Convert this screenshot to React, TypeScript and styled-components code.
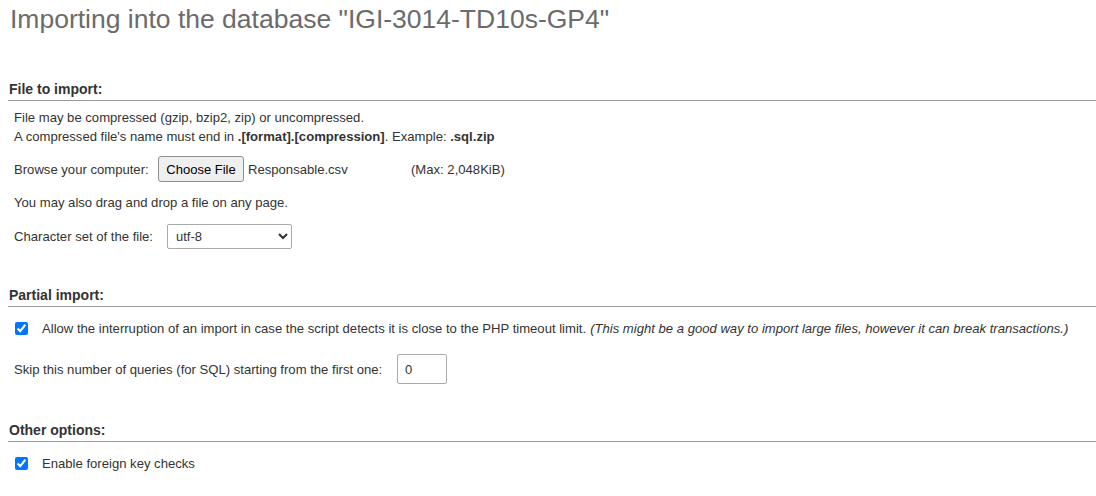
import * as React from 'react';
import styled, { createGlobalStyle } from 'styled-components';

const GlobalStyle = createGlobalStyle`
  html, body {
    margin: 0;
    padding: 0;
    background: #fff;
  }
  body {
    font-family: "Liberation Sans", Arial, sans-serif;
    font-size: 13px;
    color: #333;
  }
`;

const Page = styled.div`
  padding: 3px 0 0 8px;
`;

const Title = styled.h2`
  margin: 0 0 45px 2px;
  font-size: 26.5px;
  line-height: 32px;
  font-weight: normal;
  color: #6b6b6b;
`;

const Section = styled.section<{ gap?: number }>`
  margin-bottom: ${(p) => p.gap ?? 0}px;
`;

const SectionHeader = styled.h3`
  margin: 0;
  padding-left: 1px;
  height: 20px;
  line-height: 18px;
  font-size: 14px;
  font-weight: bold;
  color: #333;
  border-bottom: 1px solid #999;
`;

const Body = styled.div`
  padding-left: 6px;
  font-size: 13.1px;
`;

const Row = styled.div<{ top: number }>`
  display: flex;
  align-items: center;
  margin-top: ${(p) => p.top}px;
  min-height: 19px;
  line-height: 19px;
`;

const Note = styled.div<{ top?: number }>`
  margin-top: ${(p) => p.top ?? 0}px;
  line-height: 19px;
`;

const Label = styled.label<{ width: number }>`
  width: ${(p) => p.width}px;
  flex-shrink: 0;
`;

const FileButton = styled.button`
  width: 86px;
  height: 26px;
  padding: 0;
  font-family: inherit;
  font-size: 13px;
  color: #000;
  background: #efefef;
  border: 1px solid #8f8f8f;
  border-radius: 3px;
`;

const FileName = styled.span`
  margin-left: 4px;
  width: 163px;
`;

const Charset = styled.select`
  width: 125px;
  height: 25px;
  padding: 0 4px;
  font-family: inherit;
  font-size: 13px;
  color: #333;
  background: #fff;
  border: 1px solid #aaa;
  border-radius: 2px;
`;

const Check = styled.input`
  width: 13px;
  height: 13px;
  margin: 0 14px 0 1px;
  accent-color: #0075ff;
`;

const Hint = styled.em`
  margin-left: 4px;
`;

const NumberInput = styled.input`
  width: 50px;
  height: 30px;
  box-sizing: border-box;
  padding: 0 7px;
  font-family: inherit;
  font-size: 13px;
  color: #333;
  border: 1px solid #aaa;
  border-radius: 2px;
`;

export default function App() {
  return (
    <Page>
      <GlobalStyle />
      <Title>Importing into the database "IGI-3014-TD10s-GP4"</Title>

      <Section gap={37}>
        <SectionHeader>File to import:</SectionHeader>
        <Body>
          <Note top={7}>File may be compressed (gzip, bzip2, zip) or uncompressed.</Note>
          <Note>
            A compressed file's name must end in <b>.[format].[compression]</b>. Example: <b>.sql.zip</b>
          </Note>
          <Row top={10}>
            <Label width={144}>Browse your computer:</Label>
            <FileButton type="button">Choose File</FileButton>
            <FileName>Responsable.csv</FileName>
            <span>(Max: 2,048KiB)</span>
          </Row>
          <Row top={11}>You may also drag and drop a file on any page.</Row>
          <Row top={12}>
            <Label width={153}>Character set of the file:</Label>
            <Charset defaultValue="utf-8">
              <option value="utf-8">utf-8</option>
              <option value="iso-8859-1">iso-8859-1</option>
            </Charset>
          </Row>
        </Body>
      </Section>

      <Section gap={37}>
        <SectionHeader>Partial import:</SectionHeader>
        <Body>
          <Row top={12}>
            <Check type="checkbox" defaultChecked />
            <span>
              Allow the interruption of an import in case the script detects it is close to the PHP timeout limit.
              <Hint>(This might be a good way to import large files, however it can break transactions.)</Hint>
            </span>
          </Row>
          <Row top={16}>
            <Label width={383}>Skip this number of queries (for SQL) starting from the first one:</Label>
            <NumberInput type="number" defaultValue={0} />
          </Row>
        </Body>
      </Section>

      <Section>
        <SectionHeader>Other options:</SectionHeader>
        <Body>
          <Row top={12}>
            <Check type="checkbox" defaultChecked />
            <span>Enable foreign key checks</span>
          </Row>
        </Body>
      </Section>
    </Page>
  );
}
